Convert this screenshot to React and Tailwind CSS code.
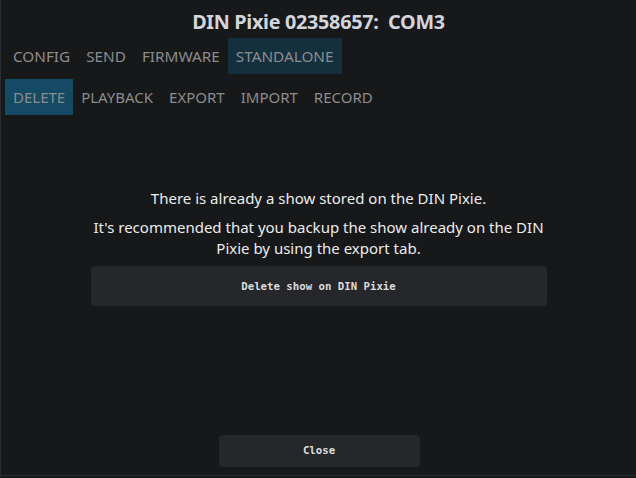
import React, { useState } from 'react'

const mainTabs = ['CONFIG', 'SEND', 'FIRMWARE', 'STANDALONE']
const subTabs = ['DELETE', 'PLAYBACK', 'EXPORT', 'IMPORT', 'RECORD']

const App = () => {
  const [tab, setTab] = useState('STANDALONE')
  const [sub, setSub] = useState('DELETE')

  return (
    <div className="min-h-screen bg-[#17181a]" style={{ fontFamily: '"Noto Sans", "Open Sans", sans-serif' }}>
      <div className="h-[476px] flex flex-col border-l border-b border-[#2c2d31]">
        {/* Title */}
        <div className="h-[38px] flex items-center justify-center pt-[6px]">
          <h1 className="text-[19.8px] font-bold text-[#d4d5dc] tracking-[-0.3px]">DIN Pixie 02358657:&nbsp; COM3</h1>
        </div>

        {/* Main tabs */}
        <div className="flex pl-[4px]">
          {mainTabs.map(t => (
            <button
              key={t}
              onClick={() => setTab(t)}
              className={`h-[36px] px-[8px] text-[15.3px] text-[#8c8c8c] ${tab === t ? 'bg-[#14303f]' : ''}`}
            >
              {t}
            </button>
          ))}
        </div>

        {/* Sub tabs */}
        <div className="flex pl-[4px] mt-[5px]">
          {subTabs.map(t => (
            <button
              key={t}
              onClick={() => setSub(t)}
              className={`h-[36px] px-[8px] text-[15px] text-[#8c8c8c] ${sub === t ? 'bg-[#144a63]' : ''}`}
            >
              {t}
            </button>
          ))}
        </div>

        {/* Delete content */}
        <div className="flex flex-col items-center mt-[73px]">
          <div className="w-[460px] flex flex-col items-center text-center text-[15px] leading-[21px] text-[#ececec]">
            <p className="mb-[8px]">There is already a show stored on the DIN Pixie.</p>
            <p>It's recommended that you backup the show already on the DIN Pixie by using the export tab.</p>
            <button className="mt-[7px] w-[456px] h-[40px] rounded-[4px] bg-[#26272a] text-[10.7px] font-bold text-[#dcdcdc]" style={{ fontFamily: '"DejaVu Sans Mono", "Liberation Mono", monospace' }}>
              Delete show on DIN Pixie
            </button>
          </div>
        </div>

        {/* Close */}
        <div className="mt-auto flex justify-center pb-[8px] pl-[1px]">
          <button className="w-[201px] h-[32px] rounded-[4px] bg-[#26272a] text-[10.7px] font-bold text-[#dcdcdc]" style={{ fontFamily: '"DejaVu Sans Mono", "Liberation Mono", monospace' }}>
            Close
          </button>
        </div>
      </div>
    </div>
  )
}

export default App
